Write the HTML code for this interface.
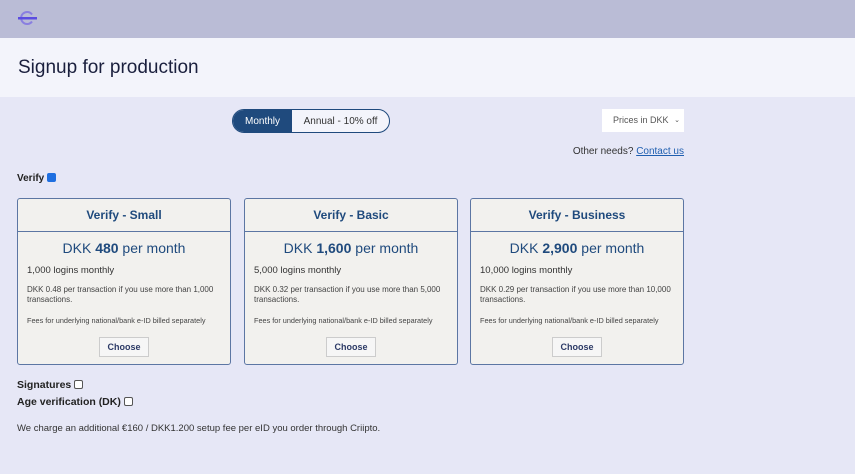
<!DOCTYPE html>
<html><head><style>
body{margin:0;width:855px;height:474px;background:#e6e7f6;font-family:"Liberation Sans",sans-serif;position:relative;overflow:hidden;color:#222}
.a{position:absolute}
.card{position:absolute;top:198px;width:214px;height:167px;border:1px solid #5c76a3;border-radius:3px;background:#f2f1ee;box-sizing:border-box}
.card .h{height:32px;border-bottom:1px solid #5c76a3;text-align:center;line-height:32px;font-weight:bold;font-size:12px;color:#1f4a7d}
.card .p{text-align:center;font-size:14px;color:#1f4a7d;margin-top:8px}
.card .l{font-size:9.5px;margin:9px 0 0 9px;color:#333}
.card .t{font-size:8px;margin:9px 9px 0 9px;line-height:10px;color:#444}
.card .f{font-size:7.3px;margin:11px 0 0 9px;color:#444}
.card .b{position:absolute;left:81px;top:138px;width:50px;height:20px;border:1px solid #ccc;background:#f6f6f6;font-size:9px;font-weight:bold;color:#2c3a66;text-align:center;line-height:19px;box-sizing:border-box}
.cb{display:inline-block;width:7px;height:7px;border:1px solid #555;border-radius:2px;background:#fff;vertical-align:-1px;margin-left:3px}
</style></head><body>
<div class="a" style="left:0;top:0;width:855px;height:38px;background:#babcd6"></div>
<svg class="a" style="left:17px;top:10px" width="22" height="16"><path d="M15 4.5A6 6 0 1 0 15 11.5" fill="none" stroke="#8a7fe0" stroke-width="2"/><rect x="1" y="7" width="19" height="2.5" fill="#5b4ce0"/></svg>
<div class="a" style="left:0;top:38px;width:855px;height:59px;background:#f3f4fb"></div>
<div class="a" style="left:18px;top:57px;font-size:19px;color:#1a1f3d">Signup for production</div>
<div class="a" style="left:232px;top:109px;width:156px;height:22px;border:1px solid #1f4a7d;border-radius:12px;overflow:hidden;background:#f3f4fb;font-size:10px;line-height:24px">
<div class="a" style="left:0;top:0;width:59px;height:22px;background:#1f4a7d;color:#fff;text-align:center">Monthly</div>
<div class="a" style="left:59px;top:0;width:97px;height:22px;color:#333;text-align:center">Annual - 10% off</div></div>
<div class="a" style="left:602px;top:109px;width:82px;height:23px;background:#fff;font-size:9px;line-height:23px;color:#555"><span style="margin-left:11px">Prices in DKK</span><span style="position:absolute;right:4px;font-size:7px">&#8964;</span></div>
<div class="a" style="right:171px;top:146px;font-size:10px;color:#333;white-space:nowrap">Other needs? <span style="color:#1f5fb0;text-decoration:underline">Contact us</span></div>
<div class="a" style="left:17px;top:173px;font-size:10px;font-weight:bold">Verify<span class="cb" style="background:#1f6fe0;border-color:#1f6fe0"></span></div>
<div class="card" style="left:17px"><div class="h">Verify - Small</div><div class="p">DKK <b>480</b> per month</div><div class="l">1,000 logins monthly</div><div class="t">DKK 0.48 per transaction if you use more than 1,000 transactions.</div><div class="f">Fees for underlying national/bank e-ID billed separately</div><div class="b">Choose</div></div>
<div class="card" style="left:244px"><div class="h">Verify - Basic</div><div class="p">DKK <b>1,600</b> per month</div><div class="l">5,000 logins monthly</div><div class="t">DKK 0.32 per transaction if you use more than 5,000 transactions.</div><div class="f">Fees for underlying national/bank e-ID billed separately</div><div class="b">Choose</div></div>
<div class="card" style="left:470px"><div class="h">Verify - Business</div><div class="p">DKK <b>2,900</b> per month</div><div class="l">10,000 logins monthly</div><div class="t">DKK 0.29 per transaction if you use more than 10,000 transactions.</div><div class="f">Fees for underlying national/bank e-ID billed separately</div><div class="b">Choose</div></div>
<div class="a" style="left:17px;top:379px;font-size:10.5px;font-weight:bold">Signatures<span class="cb"></span></div>
<div class="a" style="left:17px;top:396px;font-size:10.5px;font-weight:bold">Age verification (DK)<span class="cb"></span></div>
<div class="a" style="left:17px;top:423px;font-size:9.5px;color:#333">We charge an additional €160 / DKK1.200 setup fee per eID you order through Criipto.</div>
</body></html>
